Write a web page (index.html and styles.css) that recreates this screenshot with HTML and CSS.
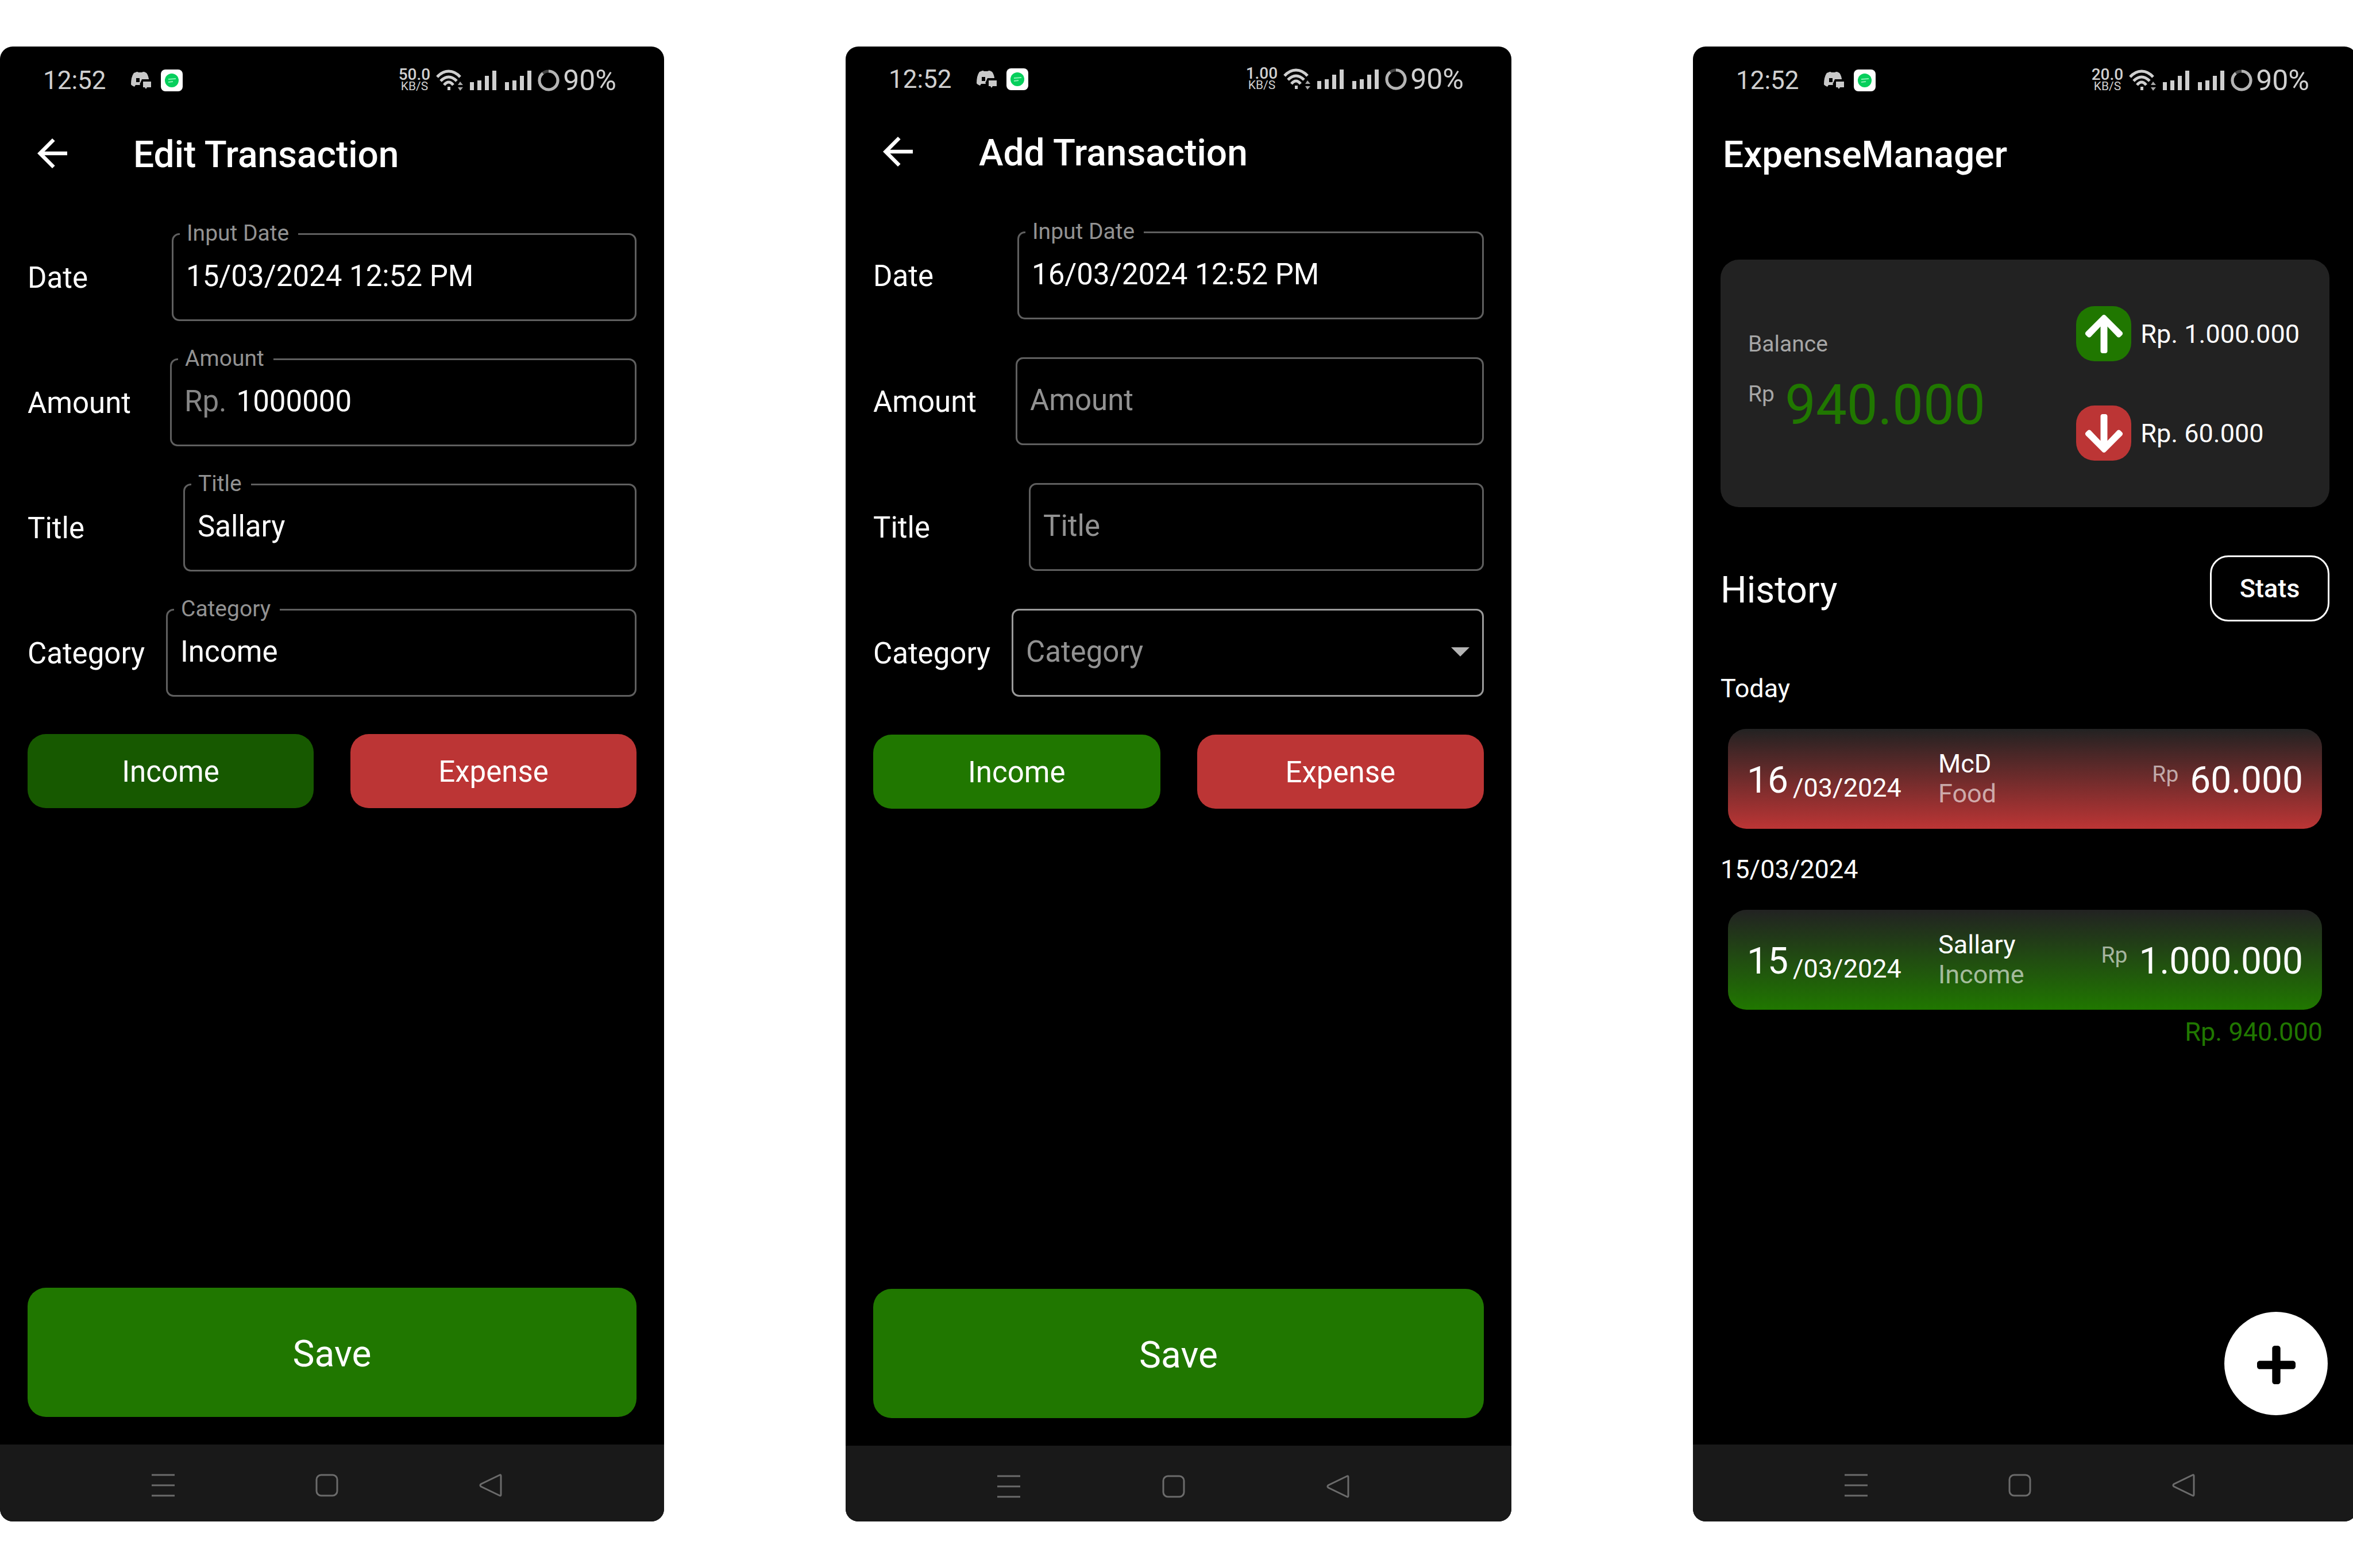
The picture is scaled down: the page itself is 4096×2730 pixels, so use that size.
FILE: index.html
```html
<!DOCTYPE html>
<html lang="en">
<head>
<meta charset="utf-8">
<title>ExpenseManager</title>
<link rel="stylesheet" href="styles.css">
</head>
<body>
<svg class="sprite" aria-hidden="true">
  <symbol id="discord" viewBox="0 0 36 30">
    <path fill="#c9c9c9" fill-rule="evenodd" d="M9 1q3-2 5 0h6q3-2 6 0 4 1 6 11l0 1H20l-4 9h1v1H9l-2 3Q2 24 1 22 1 9 6 2zM10 11v7h6v-7z"/>
    <path fill="#c9c9c9" d="M22 17h14v10h-7l-2 3-2-3h-3z"/>
  </symbol>
  <symbol id="chat" viewBox="0 0 38 38">
    <rect width="38" height="38" rx="8" fill="#fff"/>
    <circle cx="19" cy="19" r="12" fill="#06cf5c"/>
    <path d="M13 17l13-1M13 22l8-1" stroke="#8cf0b4" stroke-width="2" fill="none"/>
  </symbol>
  <symbol id="wifi" viewBox="0 0 48 38">
    <g fill="none" stroke="#cfcfcf" stroke-width="5">
      <path d="M2 13Q11 3 22 3t20 10"/>
      <path d="M8 20q7-7 14-7t14 7"/>
      <path d="M14 27q4-5 8-5t8 5"/>
    </g>
    <rect x="20" y="30" width="5" height="6" fill="#cfcfcf"/>
    <path d="M38 27l4-6 5 6zM38 31h9l-5 6z" fill="#a8a8a8"/>
  </symbol>
  <symbol id="signal" viewBox="0 0 46 34">
    <path fill="#cfcfcf" d="M0 20h7v14H0zM13 17h7v17h-7zM26 9h7v25h-7zM39 0h7v34h-7z"/>
  </symbol>
  <symbol id="battery" viewBox="0 0 38 38">
    <circle cx="19" cy="19" r="16" fill="none" stroke="#444" stroke-width="5"/>
    <path d="M19 3A16 16 0 1 1 9 6.500" fill="none" stroke="#b4b4b4" stroke-width="5"/>
  </symbol>
  <symbol id="back" viewBox="0 0 24 24">
    <path fill="#fff" d="M20 11H7.830l5.590-5.590L12 4l-8 8 8 8 1.410-1.410L7.830 13H20z"/>
  </symbol>
  <symbol id="nav-menu" viewBox="0 0 40 40">
    <path d="M0 2h40M0 20h40M0 38h40" stroke="#6b6b6b" stroke-width="3"/>
  </symbol>
  <symbol id="nav-home" viewBox="0 0 40 40">
    <rect x="2" y="2" width="36" height="36" rx="8" fill="none" stroke="#6b6b6b" stroke-width="3"/>
  </symbol>
  <symbol id="nav-back" viewBox="0 0 40 40">
    <path d="M36 2q2-1 2 2v32q0 3-2 2L3 22q-2-2 0-4z" fill="none" stroke="#6b6b6b" stroke-width="3"/>
  </symbol>
  <symbol id="arrow-up" viewBox="0 0 448 512">
    <path fill="#fff" d="M34.900 289.500l-22.200-22.200c-9.400-9.400-9.400-24.600 0-33.900L207 39c9.400-9.400 24.600-9.400 33.900 0l194.300 194.300c9.400 9.400 9.400 24.600 0 33.900L413 289.400c-9.500 9.500-25 9.300-34.300-.4L264 168.600V456c0 13.300-10.700 24-24 24h-32c-13.300 0-24-10.700-24-24V168.600L69.200 289.100c-9.300 9.800-24.800 10-34.300.4z"/>
  </symbol>
  <symbol id="arrow-down" viewBox="0 0 448 512">
    <use href="#arrow-up" width="448" height="512" transform="rotate(180 224 256)"/>
  </symbol>
  <symbol id="plus" viewBox="0 0 448 512">
    <path fill="#000" d="M416 208H272V64c0-17.670-14.330-32-32-32h-32c-17.670 0-32 14.330-32 32v144H32c-17.670 0-32 14.330-32 32v32c0 17.670 14.330 32 32 32h144v144c0 17.670 14.330 32 32 32h32c17.670 0 32-14.330 32-32V304h144c17.670 0 32-14.330 32-32v-32c0-17.670-14.330-32-32-32z"/>
  </symbol>
</svg>

<main class="board">
  <section class="phone">
    <div class="status">
      <span class="clock">12:52</span>
      <svg class="ic-discord"><use href="#discord"/></svg>
      <svg class="ic-chat"><use href="#chat"/></svg>
      <span class="speed"><b>50.0</b><i>KB/S</i></span>
      <svg class="ic-wifi"><use href="#wifi"/></svg>
      <svg class="ic-signal"><use href="#signal"/></svg>
      <svg class="ic-signal"><use href="#signal"/></svg>
      <svg class="ic-battery"><use href="#battery"/></svg>
      <span class="percent">90%</span>
    </div>
    <header class="topbar">
      <button class="back" aria-label="Back"><svg><use href="#back"/></svg></button>
      <h1>Edit Transaction</h1>
    </header>
    <form class="form">
      <div class="row">
        <label class="name name-date" for="edit-date">Date</label>
        <div class="field"><span class="float">Input Date</span><input id="edit-date" value="15/03/2024 12:52 PM"></div>
      </div>
      <div class="row">
        <label class="name name-amount" for="edit-amount">Amount</label>
        <div class="field"><span class="float">Amount</span><span class="prefix">Rp.</span><input id="edit-amount" value="1000000"></div>
      </div>
      <div class="row">
        <label class="name name-title" for="edit-title">Title</label>
        <div class="field"><span class="float">Title</span><input id="edit-title" value="Sallary"></div>
      </div>
      <div class="row">
        <label class="name name-category" for="edit-category">Category</label>
        <div class="field"><span class="float">Category</span><input id="edit-category" value="Income"></div>
      </div>
      <div class="kinds">
        <button type="button" class="kind income chosen">Income</button>
        <button type="button" class="kind expense">Expense</button>
      </div>
      <button type="button" class="save">Save</button>
    </form>
    <nav class="sysnav">
      <button aria-label="Recent"><svg><use href="#nav-menu"/></svg></button>
      <button aria-label="Home"><svg><use href="#nav-home"/></svg></button>
      <button aria-label="Back"><svg><use href="#nav-back"/></svg></button>
    </nav>
  </section>

  <section class="phone phone-add">
    <div class="status">
      <span class="clock">12:52</span>
      <svg class="ic-discord"><use href="#discord"/></svg>
      <svg class="ic-chat"><use href="#chat"/></svg>
      <span class="speed"><b>1.00</b><i>KB/S</i></span>
      <svg class="ic-wifi"><use href="#wifi"/></svg>
      <svg class="ic-signal"><use href="#signal"/></svg>
      <svg class="ic-signal"><use href="#signal"/></svg>
      <svg class="ic-battery"><use href="#battery"/></svg>
      <span class="percent">90%</span>
    </div>
    <header class="topbar">
      <button class="back" aria-label="Back"><svg><use href="#back"/></svg></button>
      <h1>Add Transaction</h1>
    </header>
    <form class="form">
      <div class="row">
        <label class="name name-date" for="add-date">Date</label>
        <div class="field"><span class="float">Input Date</span><input id="add-date" value="16/03/2024 12:52 PM"></div>
      </div>
      <div class="row">
        <label class="name name-amount" for="add-amount">Amount</label>
        <div class="field"><input id="add-amount" placeholder="Amount"></div>
      </div>
      <div class="row">
        <label class="name name-title" for="add-title">Title</label>
        <div class="field"><input id="add-title" placeholder="Title"></div>
      </div>
      <div class="row">
        <label class="name name-category" for="add-category">Category</label>
        <div class="field field-select"><select id="add-category"><option>Category</option></select><span class="caret"></span></div>
      </div>
      <div class="kinds">
        <button type="button" class="kind income">Income</button>
        <button type="button" class="kind expense">Expense</button>
      </div>
      <button type="button" class="save">Save</button>
    </form>
    <nav class="sysnav">
      <button aria-label="Recent"><svg><use href="#nav-menu"/></svg></button>
      <button aria-label="Home"><svg><use href="#nav-home"/></svg></button>
      <button aria-label="Back"><svg><use href="#nav-back"/></svg></button>
    </nav>
  </section>

  <section class="phone">
    <div class="status">
      <span class="clock">12:52</span>
      <svg class="ic-discord"><use href="#discord"/></svg>
      <svg class="ic-chat"><use href="#chat"/></svg>
      <span class="speed"><b>20.0</b><i>KB/S</i></span>
      <svg class="ic-wifi"><use href="#wifi"/></svg>
      <svg class="ic-signal"><use href="#signal"/></svg>
      <svg class="ic-signal"><use href="#signal"/></svg>
      <svg class="ic-battery"><use href="#battery"/></svg>
      <span class="percent">90%</span>
    </div>
    <header class="topbar"><h1>ExpenseManager</h1></header>
    <div class="home">
      <section class="balance">
        <div class="total">
          <span class="caption">Balance</span>
          <div class="sum"><span class="unit">Rp</span><strong>940.000</strong></div>
        </div>
        <div class="flows">
          <div class="flow"><span class="badge up"><svg><use href="#arrow-up"/></svg></span>Rp. 1.000.000</div>
          <div class="flow"><span class="badge down"><svg><use href="#arrow-down"/></svg></span>Rp. 60.000</div>
        </div>
      </section>
      <div class="history-head">
        <h2>History</h2>
        <button class="stats">Stats</button>
      </div>
      <h3 class="day">Today</h3>
      <article class="entry spent">
        <div class="date"><b>16</b><span>/03/2024</span></div>
        <div class="what"><span>McD</span><span class="tag">Food</span></div>
        <div class="cost"><span class="tag">Rp</span><b>60.000</b></div>
      </article>
      <h3 class="day">15/03/2024</h3>
      <article class="entry earned">
        <div class="date"><b>15</b><span>/03/2024</span></div>
        <div class="what"><span>Sallary</span><span class="tag">Income</span></div>
        <div class="cost"><span class="tag">Rp</span><b>1.000.000</b></div>
      </article>
      <p class="running">Rp. 940.000</p>
      <button class="fab" aria-label="Add transaction"><svg><use href="#plus"/></svg></button>
    </div>
    <nav class="sysnav">
      <button aria-label="Recent"><svg><use href="#nav-menu"/></svg></button>
      <button aria-label="Home"><svg><use href="#nav-home"/></svg></button>
      <button aria-label="Back"><svg><use href="#nav-back"/></svg></button>
    </nav>
  </section>
</main>
</body>
</html>
```
FILE: styles.css
```css
:root {
  --green: #207700;
  --green-dark: #175900;
  --red: #bc3535;
  --line: #5f5f5f;
  --muted: #929292;
}

* { box-sizing: border-box; }

body {
  margin: 0;
  background: #fff;
  color: #fff;
  font-family: Roboto, "Liberation Sans", sans-serif;
  overflow-x: hidden;
}

button, input, select { font: inherit; color: inherit; }
button { border: 0; padding: 0; background: none; display: flex; align-items: center; justify-content: center; }
h1, h2, h3, p { margin: 0; font-weight: 400; }
b, strong, i { font-weight: 400; font-style: normal; }
svg { display: block; flex: none; }
.sprite { position: absolute; width: 0; height: 0; }

.board {
  display: grid;
  grid-template-columns: 1156fr 1159fr 1156fr;
  gap: 316px;
  min-height: 100vh;
  margin-right: -7px;
  padding: 81px 0;
}

.phone {
  display: flex;
  flex-direction: column;
  min-width: 0;
  border-radius: 22px;
  background: #000;
  overflow: hidden;
}

/* Status bar */
.status {
  display: flex;
  align-items: center;
  height: 118px;
  padding: 0 83px 0 75px;
  color: #d0d0d0;
}
.clock { font-size: 44px; }
.ic-discord { width: 36px; height: 30px; margin-left: 42px; }
.ic-chat { width: 38px; height: 38px; margin: 0 auto 0 17px; }
.speed { display: flex; flex-direction: column; align-items: center; line-height: 20px; font-weight: 500; }
.speed b { font-size: 28px; font-weight: 500; }
.speed i { font-size: 21px; }
.ic-wifi { width: 48px; height: 38px; margin: 0 11px 0 10px; }
.ic-signal { width: 46px; height: 34px; margin-right: 15px; }
.ic-battery { width: 38px; height: 38px; margin: 0 6px 0 -4px; }
.percent { font-size: 50px; }

/* App bar */
.topbar {
  display: flex;
  align-items: center;
  height: 140px;
  padding-left: 52px;
}
.topbar h1 { font-size: 64px; font-weight: 500; }
.back { margin-right: 102px; padding-bottom: 4px; }
.back svg { width: 78px; height: 78px; }

/* Transaction form */
.form {
  display: flex;
  flex-direction: column;
  flex: 1;
  gap: 65px;
  padding: 67px 48px 48px;
  font-size: 51px;
}
.row { display: flex; align-items: center; }
.name { flex: none; padding-top: 2px; }
.name-date { width: 251px; }
.name-amount { width: 248px; }
.name-title { width: 271px; }
.name-category { width: 241px; }

.field {
  position: relative;
  display: flex;
  flex: 1;
  align-items: center;
  min-width: 0;
  height: 153px;
  padding: 0 22px 4px;
  border: 3px solid var(--line);
  border-radius: 13px;
}
.field input, .field select {
  flex: 1;
  min-width: 0;
  padding: 0;
  border: 0;
  background: none;
  outline: 0;
  appearance: none;
}
.field input::placeholder { color: var(--muted); opacity: 1; }
.float {
  position: absolute;
  top: -27px;
  left: 11px;
  padding: 0 16px 0 12px;
  background: #000;
  color: var(--muted);
  font-size: 39px;
  line-height: 48px;
}
.prefix { margin-right: 17px; color: #858585; }
.field-select { border-color: #9a9a9a; color: var(--muted); }
.caret {
  border: 16px solid transparent;
  border-top-color: #b4b4b4;
  border-bottom: 0;
}

.kinds { display: flex; gap: 64px; }
.kind { flex: 1; height: 129px; padding-top: 2px; border-radius: 32px; }
.income { background: var(--green); }
.income.chosen { background: var(--green-dark); }
.expense { background: var(--red); }
.save {
  height: 225px;
  margin-top: auto;
  padding-top: 5px;
  border-radius: 32px;
  background: var(--green);
  font-size: 64px;
}

/* System navigation */
.sysnav {
  display: flex;
  align-items: center;
  justify-content: space-between;
  height: 134px;
  padding: 7px 282px 0 264px;
  background: #191919;
}
.sysnav svg { width: 40px; height: 40px; }

.phone-add .status { height: 114px; }
.phone-add .topbar { height: 142px; }
.phone-add .form { gap: 66px; padding-top: 66px; }
.phone-add .sysnav { height: 132px; padding-top: 10px; }

/* Home screen */
.home {
  display: flex;
  flex-direction: column;
  flex: 1;
  padding: 113px 48px 51px;
  font-size: 45px;
}
.balance {
  display: flex;
  justify-content: space-between;
  align-items: center;
  height: 431px;
  padding: 0 52px 0 48px;
  border-radius: 32px;
  background: #222;
}
.caption, .unit { font-size: 39px; color: #a6a6a6; }
.unit { padding-top: 14px; }
.total { padding-bottom: 5px; }
.sum { display: flex; align-items: flex-start; gap: 18px; padding-top: 26px; }
.sum strong { font-size: 96px; line-height: 112px; color: var(--green); }
.flows { display: flex; flex-direction: column; gap: 77px; }
.flow { display: flex; align-items: center; gap: 16px; }
.badge {
  display: flex;
  align-items: center;
  justify-content: center;
  width: 96px;
  height: 96px;
  border-radius: 32px;
}
.badge svg { width: 67px; height: 77px; }
.up { background: var(--green); }
.down { background: var(--red); }

.history-head { display: flex; align-items: center; justify-content: space-between; padding: 84px 0 90px; }
.history-head h2 { padding-top: 5px; font-size: 64px; }
.stats { width: 208px; height: 115px; border: 3px solid #fff; border-radius: 32px; font-weight: 500; }

.day { font-size: 45px; line-height: 53px; }
.entry {
  display: flex;
  align-items: center;
  height: 174px;
  margin: 44px 13px;
  padding: 0 33px;
  border-radius: 32px;
}
.spent { background: linear-gradient(#222, var(--red)); }
.earned { background: linear-gradient(#222, var(--green)); margin-bottom: 12px; }
.date { display: flex; align-items: flex-end; gap: 8px; width: 333px; padding-top: 4px; }
.date span { line-height: 48px; }
.entry b { font-size: 64px; }
.what { display: flex; flex-direction: column; flex: 1; line-height: 52px; }
.tag { color: rgba(255, 255, 255, .6); }
.cost { display: flex; align-items: flex-start; gap: 20px; padding-top: 4px; }
.cost .tag { padding-top: 4px; font-size: 39px; }
.running { margin-right: 12px; line-height: 53px; color: var(--green); text-align: right; }
.fab {
  align-self: flex-end;
  width: 180px;
  height: 180px;
  margin: auto 3px 0 0;
  padding-top: 5px;
  border-radius: 50%;
  background: #fff;
}
.fab svg { width: 67px; height: 77px; }
```
